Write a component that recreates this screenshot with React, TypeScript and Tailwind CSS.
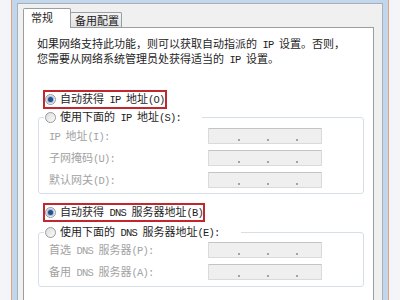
import type { ReactNode } from "react";

// half-width latin runs, like the SimSun ASCII glyphs in the dialog
function M({ children }: { children: ReactNode }) {
  return (
    <span className="font-['Liberation_Mono',monospace] text-[10.5px] tracking-[-0.8px] whitespace-pre">
      {children}
    </span>
  );
}

function Radio({ on }: { on?: boolean }) {
  return (
    <span className="w-[11px] h-[11px] shrink-0 rounded-full border border-[#979a9e] bg-linear-to-br from-[#dcdcdc] to-[#fbfbfb] flex items-center justify-center">
      {on && (
        <span className="w-[5px] h-[5px] rounded-full bg-[#2a4f86] shadow-[0_0_1px_1px_#8fb2dd]" />
      )}
    </span>
  );
}

function IpBox() {
  return (
    <div className="w-[114px] h-[16px] rounded-[1px] border border-[#dadada] border-t-[#c4c4c4] bg-[#efefef] flex items-end pb-[2px] pl-[29px] gap-[27px]">
      <span className="w-[2px] h-[2px] bg-[#a3a3a3]" />
      <span className="w-[2px] h-[2px] bg-[#a3a3a3]" />
      <span className="w-[2px] h-[2px] bg-[#a3a3a3]" />
    </div>
  );
}

function Group({
  legend,
  rows,
  top,
  bottom,
}: {
  legend: ReactNode;
  rows: ReactNode[];
  top: string;
  bottom: string;
}) {
  return (
    <fieldset className={`ml-[14px] w-[326px] rounded-[3px] border border-[#d5dfe5] ${bottom}`}>
      <legend className="ml-[5px] pl-[1px] pr-[21px]">
        <div className="flex items-center h-[14px] text-[#1e1e1e]">
          <Radio />
          <span className="ml-[4px] whitespace-nowrap">{legend}</span>
        </div>
      </legend>
      <div className={`grid grid-cols-[159px_114px] gap-y-[6px] items-center pl-[10px] text-[#a2a2a2] ${top}`}>
        {rows.map((r, i) => (
          <div key={i} className="contents">
            <span className="whitespace-nowrap">{r}</span>
            <IpBox />
          </div>
        ))}
      </div>
    </fieldset>
  );
}

export default function App() {
  return (
    <div className="w-[400px] h-[300px] overflow-hidden bg-[#f3f5f8] flex px-[11px] font-['Noto_Sans_CJK_SC',sans-serif] text-[11px] leading-[13px]">
      <div className="flex-1 flex border-x border-[#e3a47c] bg-[#c3d7ec] px-[5px] pt-[3px]">
        <div className="flex-1 flex flex-col border-x border-t border-[#a7afb9] bg-[#f0f0f0]">
          {/* tabs */}
          <div className="flex items-end pl-[5px] mt-[4px]">
            <div className="relative z-10 -mb-px w-[48px] h-[20px] rounded-t-[2px] border border-b-0 border-[#999da4] bg-white pl-[7px] pt-[2px] text-[#1e1e1e]">
              常规
            </div>
            <div className="-ml-px w-[52px] h-[15px] rounded-t-[2px] border border-b-0 border-[#999da4] bg-linear-to-b from-[#f5f5f5] to-[#e1e1e1] pl-[4px] pt-[1px] text-[#1e1e1e]">
              备用配置
            </div>
          </div>

          {/* panel */}
          <div className="ml-[5px] w-[351px] flex-1 border border-[#999da4] bg-white text-[#1e1e1e]">
            <div className="pl-[13px] pt-[9px] whitespace-nowrap">
              <div>
                如果网络支持此功能，则可以获取自动指派的<M> IP </M>设置。否则，
              </div>
              <div>
                您需要从网络系统管理员处获得适当的<M> IP </M>设置。
              </div>
            </div>

            <div className="ml-[19px] mt-[23px] w-[124px] h-[19px] border-2 border-[#c0282e] flex items-center">
              <Radio on />
              <span className="ml-[4px] whitespace-nowrap">
                自动获得<M> IP </M>地址<M>(O)</M>
              </span>
            </div>

            <div className="mt-[1px]">
              <Group
                legend={
                  <>
                    使用下面的<M> IP </M>地址<M>(S):</M>
                  </>
                }
                rows={[
                  <>
                    <M>IP </M>地址<M>(I):</M>
                  </>,
                  <>
                    子网掩码<M>(U):</M>
                  </>,
                  <>
                    默认网关<M>(D):</M>
                  </>,
                ]}
                top="pt-[4px]"
                bottom="pb-[5px]"
              />
            </div>

            <div className="ml-[19px] mt-[9px] w-[162px] h-[19px] border-2 border-[#c0282e] flex items-center">
              <Radio on />
              <span className="ml-[4px] whitespace-nowrap">
                自动获得<M> DNS </M>服务器地址<M>(B)</M>
              </span>
            </div>

            <div className="mt-[3px]">
              <Group
                legend={
                  <>
                    使用下面的<M> DNS </M>服务器地址<M>(E):</M>
                  </>
                }
                rows={[
                  <>
                    首选<M> DNS </M>服务器<M>(P):</M>
                  </>,
                  <>
                    备用<M> DNS </M>服务器<M>(A):</M>
                  </>,
                ]}
                top="pt-[3px]"
                bottom="pb-[6px]"
              />
            </div>

            <div className="flex items-start mt-[14px]">
              <span className="ml-[25px] w-[13px] h-[13px] shrink-0 border border-[#8f8f8f] bg-linear-to-br from-[#dedede] to-[#fafafa]" />
              <span className="ml-[4px] whitespace-nowrap">
                退出时验证设置<M>(L)</M>
              </span>
              <div className="ml-auto mr-[11px] mt-[1px] w-[78px] h-[23px] rounded-[3px] border border-[#707070] bg-linear-to-b from-[#f2f2f2] to-[#dcdcdc] flex items-center justify-center">
                高级<M>(V)...</M>
              </div>
            </div>
          </div>
        </div>
      </div>
    </div>
  );
}
